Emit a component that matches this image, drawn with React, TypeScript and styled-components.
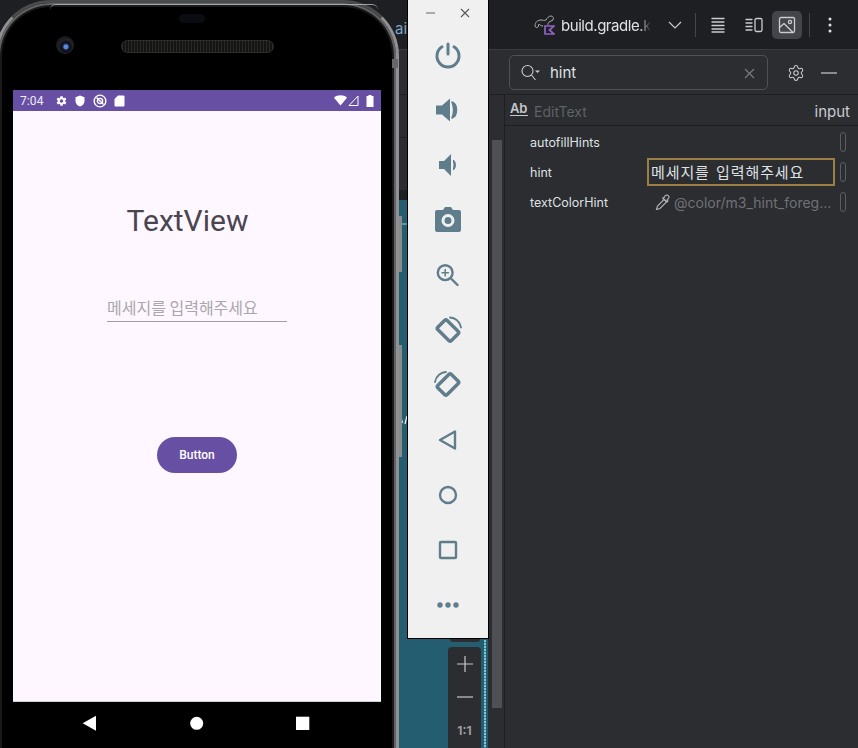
import React from "react";
import styled, { createGlobalStyle } from "styled-components";
import { Settings } from "lucide-react";

const Global = createGlobalStyle`
  html, body { margin: 0; padding: 0; background: #1e1f22; }
  body { width: 858px; height: 748px; overflow: hidden; font-family: "Inter", "Noto Sans CJK KR", sans-serif; }
  * { box-sizing: border-box; }
`;
const KR = `"Noto Sans CJK KR", "Noto Sans", sans-serif`;
const Page = styled.div`
  position: relative; width: 858px; height: 748px; overflow: hidden;
  display: grid; grid-template-columns: 505px 353px; background: #1e1f22;
`;
const Canvas = styled.div`
  display: grid; grid-template-rows: 50px 45px 43px 52px 10px 1fr;
  background: #1e1f22; position: relative;
`;
const CanvasTopBar = styled.div`
  background: #1e1f22; border-bottom: 1px solid #393b40;
  display: flex; justify-content: flex-end; padding: 20px 0 0;
`;
const ClippedTab = styled.span`
  color: #7fa6c4; font: 15px/18px "Inter", sans-serif; width: 110px;
`;
const CanvasBand = styled.div`
  background: #2b2d30; border-bottom: 1px solid #1e1f22;
`;
const CanvasDark = styled.div`background: #2b2d30;`;
const CanvasShade = styled.div`background: #1e1f22;`;
const Teal = styled.div`background: #245c70;`;
const Gutter = styled.div`
  position: absolute; left: 488px; top: 95px; bottom: 0; width: 17px;
  background: #2b2d30; border-right: 1px solid #1e1f22;
`;
const ScrollThumb = styled.div`
  position: absolute; left: 4px; top: 45px; width: 10px; height: 568px; background: #4e5055;
`;
const Phone = styled.div`
  position: absolute; left: -5px; top: 0; width: 404px; height: 770px;
  background: #000; border-radius: 56px 56px 0 0;
  border: 3px solid #909192; border-top-color: #4a4b4c; border-bottom: none;
  box-shadow: inset 0 0 0 2px #626364, inset 0 0 0 4px #1a1a1a;
`;
const Bump = styled.div`
  position: absolute; left: 392px; top: 59px; width: 6px; height: 9px; background: #666768;
`;
const SideButton = styled.div<{ $top: number; $height: number }>`
  position: absolute; left: 399px; top: ${p => p.$top}px; width: 3px; height: ${p => p.$height}px;
  background: #8a8b8c;
`;
const CanvasScraps = styled.svg`
  position: absolute; left: 399px; top: 200px; width: 9px; height: 240px;
`;
const Highlight = styled.div`
  position: absolute; left: 52px; top: 1px; width: 328px; height: 6px;
  border-top: 1px solid #b5b6b7; border-radius: 30px 30px 0 0; opacity: .85;
`;
const Pill = styled.div`
  position: absolute; left: 181px; top: 11px; width: 26px; height: 9px;
  border-radius: 5px; background: #0b0b12;
`;
const Speaker = styled.div`
  position: absolute; left: 123px; top: 37px; width: 153px; height: 13px;
  border-radius: 7px; background: repeating-linear-gradient(90deg, #2a2a28 0 1px, #141413 1px 3px);
  border: 1px solid #2e2e2c;
`;
const Camera = styled.div`
  position: absolute; left: 58px; top: 33px; width: 18px; height: 18px; border-radius: 50%;
  background: radial-gradient(circle at 55% 60%, #5c86e0 0 2px, #1a2338 3px, #0c0e14 5px, #24252a 7px, #1a1a1c 9px);
`;
const Screen = styled.div`
  position: absolute; left: 15px; top: 87px; width: 368px; height: 612px;
  background: #fef7ff; display: flex; flex-direction: column; align-items: center;
  border-bottom: 1px solid #d0ced4;
`;
const StatusBar = styled.div`
  width: 100%; height: 21px; background: #6750a4; color: #f1edf7;
  display: flex; align-items: center; padding: 0 7px; flex: none;
`;
const Clock = styled.span`font: 12px Roboto, sans-serif; margin-right: 10px; width: 25px; letter-spacing: .1px;`;
const StatusIcons = styled.div`display: flex; align-items: center; gap: 7px;`;
const StatusRight = styled.div`display: flex; align-items: center; gap: 1px; margin-left: auto;`;
const BatteryIcon = styled.svg`margin-left: 6px;`;
const Title = styled.div`
  margin: 92px 19px 0 0; font: 30px/36px Roboto, sans-serif; color: #49454f; height: 36px;
`;
const HintField = styled.div`
  margin-top: 58px; width: 180px; height: 25px;
  border-bottom: 1.5px solid #a09ea4; color: #a9a7ac;
  font: 16px/20px ${KR}; white-space: nowrap;
`;
const ActionButton = styled.div`
  margin-top: 115px; width: 80px; height: 36px; border-radius: 18px; background: #6750a4;
  color: #fff; font: 500 12px/36px Roboto, sans-serif; text-align: center;
`;
const NavBar = styled.div`
  position: absolute; left: 15px; top: 699px; width: 368px; height: 46px;
`;
const NavIcons = styled.svg`width: 368px; height: 46px; display: block;`;

const Tool = styled.div`
  position: absolute; left: 407px; top: -1px; width: 82px; height: 640px;
  background: #f0f0f0; border: 1px solid #000; border-top: none;
  display: flex; flex-direction: column; align-items: center; padding-top: 5px;
`;
const WinRow = styled.div`
  width: 100%; height: 18px; margin-bottom: 5px; display: flex; justify-content: space-between; align-items: center; padding: 0 18px; flex: none;
`;
const ToolSlot = styled.div`
  width: 100%; height: 55px; display: flex; align-items: center; justify-content: center; flex: none;
`;
const ZoomCap = styled.div`
  position: absolute; left: 450px; top: 636px; width: 30px; height: 6px; background: #2b2d30; border-radius: 0 0 3px 3px;
`;
const ZoomBox = styled.div`
  position: absolute; left: 448px; top: 647px; width: 33px; height: 110px;
  background: #2b2d30; border-radius: 4px; display: flex; flex-direction: column; align-items: center;
  color: #c8c9cc;
`;
const ZoomGlyph = styled.svg`width: 20px; height: 33px; display: block;`;
const OneToOne = styled.div`font: 700 12px/20px Inter, sans-serif; color: #9a9b9e; margin-top: 8px;`;
const DashLine = styled.div`
  position: absolute; left: 484px; top: 640px; width: 2px; height: 108px;
  background: repeating-linear-gradient(180deg, #7fc6d8 0 2px, #3c8398 2px 3px);
`;

const Panel = styled.div`
  grid-column: 2; background: #2b2d30; display: flex; flex-direction: column; min-width: 0;
`;
const TopBar = styled.div`
  height: 50px; background: #1e1f22; border-bottom: 1px solid #393b40; flex: none;
  display: flex; align-items: center; color: #dfe1e5;
`;
const FileIcon = styled.svg`margin-left: 29px; flex: none;`;
const FileName = styled.span`
  font: 15px/20px Inter, sans-serif; color: #dfe1e5; width: 92px; white-space: nowrap; letter-spacing: -.45px;
  -webkit-mask-image: linear-gradient(90deg, #000 78px, transparent 90px); margin: 3px 0 0 6px;
`;
const Chevron = styled.svg`margin-left: 15px; flex: none;`;
const IconButton = styled.div<{ $active?: boolean; $left?: number }>`
  width: 30px; height: 28px; border-radius: 5px; display: flex; align-items: center; justify-content: center;
  margin-left: ${p => p.$left ?? 0}px;
  background: ${p => (p.$active ? "#43454a" : "transparent")}; flex: none;
`;
const Divider = styled.div<{ $left: number }>`
  width: 1px; height: 24px; background: #43454a; flex: none; margin-left: ${p => p.$left}px;
`;
const MoreIcon = styled.svg`margin-left: 18px; flex: none;`;
const SearchRow = styled.div`
  height: 45px; flex: none; border-bottom: 1px solid #1e1f22; display: flex; align-items: center; padding: 0 0 0 4px;
`;
const SearchBox = styled.div`
  width: 259px; height: 35px; border: 1px solid #4e5157; border-radius: 5px; display: flex; align-items: center;
  padding: 2px 12px 0 11px; color: #dfe1e5;
`;
const SearchText = styled.span`font: 15px/20px Inter, sans-serif; margin-left: 10px; flex: 1; color: #dfe1e5;`;
const GearWrap = styled.span`margin: 2px 0 0 19px; display: flex; color: #c9ccd1;`;
const CollapseIcon = styled.svg`margin: 2px 0 0 16px;`;
const HeaderRow = styled.div`
  height: 31px; flex: none; border-bottom: 1px solid #1e1f22; display: flex; align-items: center; padding: 3px 8px 0 5px;
`;
const AbIcon = styled.span`
  font: 600 13px/14px Inter, sans-serif; color: #c5c7cc; border-bottom: 1px solid #c5c7cc; width: 18px; height: 15px; margin-top: -6px; letter-spacing: -.3px;
`;
const ComponentName = styled.span`font: 14px Inter, sans-serif; color: #5f6166; margin-left: 6px; flex: 1;`;
const ComponentId = styled.span`font: 15px Inter, sans-serif; color: #c8cad0;`;
const AttrList = styled.div`display: flex; flex-direction: column; padding-top: 1px;`;
const AttrRow = styled.div`
  height: 30px; display: grid; grid-template-columns: 117px 188px 11px; align-items: center; padding-left: 25px;
`;
const AttrName = styled.span`font: 12.5px Inter, sans-serif; color: #dfe1e5;`;
const HintEditor = styled.div`
  width: 188px; height: 28px; border: 2px solid #9c7f45; padding: 0 2px; color: #dfe1e5;
  font: 15px/24px ${KR}; white-space: nowrap; overflow: hidden; letter-spacing: .9px; word-spacing: 2px;
`;
const ResourceValue = styled.div`
  display: flex; align-items: center; gap: 2px; padding-left: 8px; color: #6f7277; font: 14px Inter, sans-serif; white-space: nowrap;
`;
const Toggle = styled.div`
  width: 6px; height: 20px; border: 1px solid #5a5d63; border-radius: 3px; justify-self: end;
`;

const C = "#607d8b";
const stroke = { fill: "none", stroke: C, strokeWidth: 3, strokeLinecap: "round" as const, strokeLinejoin: "round" as const };
const T = ({ children }: { children: React.ReactNode }) => (
  <svg width={28} height={28} viewBox="0 0 28 28">{children}</svg>
);
const Line = ({ children }: { children: React.ReactNode }) => (
  <svg width={20} height={20} viewBox="0 0 20 20" fill="none" stroke="#c9ccd1" strokeWidth={1.3} strokeLinecap="round" strokeLinejoin="round">{children}</svg>
);

export default function App() {
  return (
    <Page>
      <Global />
      <Canvas>
        <CanvasTopBar><ClippedTab>ai</ClippedTab></CanvasTopBar>
        <CanvasBand />
        <CanvasBand />
        <CanvasDark />
        <CanvasShade />
        <Teal />
      </Canvas>
      <Panel>
        <TopBar>
          <FileIcon width="21" height="20" viewBox="0 0 21 20" fill="none" stroke="#a9abb0" strokeWidth="1">
            <path d="M1 11c0-4 3-6 6-6 2 0 3 1 5 0 1-2 3-4 5-4 2 0 3 2 2 4-1 1-3 1-4 2-1 1-1 2-1 3" />
            <path d="M1 11c1 2 2 2 3 1l1-3c1 1 2 2 4 2" />
            <path d="M11 19v-8h9l-4.500 4 4.500 4z" stroke="#8f62c9" strokeWidth="1.700" />
          </FileIcon>
          <FileName>build.gradle.k</FileName>
          <Chevron width="14" height="10" viewBox="0 0 14 10" fill="none" stroke="#c9ccd1" strokeWidth="1.200"><path d="M1 2l6 6 6-6" /></Chevron>
          <Divider $left={13} />
          <IconButton $left={7}><Line><path d="M4 3.500h12M4 7h12M4 10.500h12M4 14h12M4 17h12" /></Line></IconButton>
          <IconButton $left={6}><Line><path d="M2 4.500h6M2 8h6M2 11.500h6M2 15h6" /><rect x="11" y="3.500" width="7" height="13" rx="1.500" /></Line></IconButton>
          <IconButton $active $left={3}><Line><rect x="2.500" y="2.500" width="15" height="15" rx="1.500" /><circle cx="13" cy="7" r="1.600" /><path d="M2.500 12.500l4.500-4 9 9" /></Line></IconButton>
          <Divider $left={7} />
          <MoreIcon width="4" height="16" viewBox="0 0 4 16"><circle cx="2" cy="2" r="1.500" fill="#dfe1e5" /><circle cx="2" cy="8" r="1.500" fill="#dfe1e5" /><circle cx="2" cy="14" r="1.500" fill="#dfe1e5" /></MoreIcon>
        </TopBar>
        <SearchRow>
          <SearchBox>
            <svg width="19" height="18" viewBox="0 0 19 18" fill="none" stroke="#c9ccd1" strokeWidth="1.100"><circle cx="6.500" cy="7" r="5.500" /><path d="M10.500 11l4 5" /><path d="M14 6.500h5l-2.500 2.600z" fill="#c9ccd1" stroke="none" /></svg>
            <SearchText>hint</SearchText>
            <svg width="11" height="11" viewBox="0 0 11 11" stroke="#7a7d82" strokeWidth="1.100"><path d="M1 1l9 9M10 1l-9 9" /></svg>
          </SearchBox>
          <GearWrap><Settings size={18} strokeWidth={1.35} /></GearWrap>
          <CollapseIcon width="16" height="2" viewBox="0 0 16 2"><path d="M0 1h16" stroke="#c9ccd1" strokeWidth="1.200" /></CollapseIcon>
        </SearchRow>
        <HeaderRow>
          <AbIcon>Ab</AbIcon>
          <ComponentName>EditText</ComponentName>
          <ComponentId>input</ComponentId>
        </HeaderRow>
        <AttrList>
          <AttrRow><AttrName>autofillHints</AttrName><span /><Toggle /></AttrRow>
          <AttrRow><AttrName>hint</AttrName><HintEditor>메세지를 입력해주세요</HintEditor><Toggle /></AttrRow>
          <AttrRow>
            <AttrName>textColorHint</AttrName>
            <ResourceValue>
              <svg width="17" height="18" viewBox="0 0 17 18" fill="none" stroke="#b0b3b8" strokeWidth="1.100"><path d="M1.500 16.500l1-3.500 6.500-6.500 2.500 2.500-6.500 6.500zM8 5.500l1.500-1.500c1-3.500 6-1.500 4 1.500l-1.500 1.500 1 1-1 1-4-4z" /></svg>
              <span>@color/m3_hint_foreg...</span>
            </ResourceValue>
            <Toggle />
          </AttrRow>
        </AttrList>
      </Panel>

      <Gutter><ScrollThumb /></Gutter>
      <CanvasScraps viewBox="0 0 9 240">
        <path d="M3 24h6" stroke="#8fd6e6" strokeWidth="1" />
        <path d="M1.500 216l2 7M6 224l2-8" stroke="#e6eef2" strokeWidth="1.300" />
      </CanvasScraps>
      <DashLine />
      <ZoomCap />
      <ZoomBox>
        <ZoomGlyph viewBox="0 0 20 33"><path d="M10 9v16M2 17h16" stroke="#c8c9cc" strokeWidth="1.200" /></ZoomGlyph>
        <ZoomGlyph viewBox="0 0 20 33"><path d="M2 17h16" stroke="#c8c9cc" strokeWidth="1.200" /></ZoomGlyph>
        <OneToOne>1:1</OneToOne>
      </ZoomBox>

      <Phone>
        <Highlight />
        <Pill />
        <Speaker />
        <Camera />
        <Screen>
          <StatusBar>
            <Clock>7:04</Clock>
            <StatusIcons>
              <svg width="12" height="12" viewBox="0 0 24 24" fill="#fff"><path fillRule="evenodd" d="M20.400 13a8.500 8.500 0 000-2l2.300-1.800-2.300-4-2.700 1.100a8.500 8.500 0 00-1.700-1L15.500 2.500h-4.500L10 5.300a8.500 8.500 0 00-1.700 1L5.600 5.200l-2.300 4L5.600 11a8.500 8.500 0 000 2l-2.300 1.800 2.300 4 2.700-1.100a8.500 8.500 0 001.700 1l1 2.800h4.500l.5-2.800a8.500 8.500 0 001.700-1l2.700 1.100 2.300-4zM13 15.500a3.500 3.500 0 110-7 3.500 3.500 0 010 7z" /></svg>
              <svg width="12" height="12" viewBox="0 0 24 24" fill="#fff"><path d="M12 1L3 4.500v7c0 5.500 3.800 10 9 11.500 5.200-1.500 9-6 9-11.500v-7z" /></svg>
              <svg width="14" height="14" viewBox="0 0 24 24" fill="none" stroke="#fff" strokeWidth="2.400"><circle cx="12" cy="12" r="10" /><circle cx="12" cy="12" r="4.500" /><path d="M6 6l12 12" /></svg>
              <svg width="11" height="12" viewBox="0 0 22 24" fill="#fff"><path d="M8 1h11a2 2 0 012 2v18a2 2 0 01-2 2H3a2 2 0 01-2-2V8z" /></svg>
            </StatusIcons>
            <StatusRight>
              <svg width="13" height="11" viewBox="0 0 24 20" fill="#fff"><path d="M12 19L0 5C6-1 18-1 24 5z" /></svg>
              <svg width="11" height="11" viewBox="0 0 22 22" fill="none" stroke="#fff" strokeWidth="2"><path d="M20 2v19H2z" /></svg>
              <BatteryIcon width="8" height="12" viewBox="0 0 16 24" fill="#fff"><path d="M5 0h6v2h4v22H1V2h4z" /></BatteryIcon>
            </StatusRight>
          </StatusBar>
          <Title>TextView</Title>
          <HintField>메세지를 입력해주세요</HintField>
          <ActionButton>Button</ActionButton>
        </Screen>
        <NavBar>
          <NavIcons viewBox="0 0 368 46">
            <path d="M83 13.700L69.700 21.200 83 28.700z" fill="#fff" />
            <circle cx="183.700" cy="21.300" r="6.500" fill="#fff" />
            <rect x="283" y="14.700" width="13.300" height="13.300" fill="#fff" />
          </NavIcons>
        </NavBar>
      </Phone>
      <Bump />
      <SideButton $top={216} $height={56} />
      <SideButton $top={345} $height={112} />

      <Tool>
        <WinRow>
          <svg width="10" height="10" viewBox="0 0 10 10"><path d="M0 5h9" stroke="#6f7478" strokeWidth="1.100" /></svg>
          <svg width="10" height="10" viewBox="0 0 10 10"><path d="M1 1l8 8M9 1l-8 8" stroke="#56595c" strokeWidth="1.100" /></svg>
        </WinRow>
        <ToolSlot>
          <T><path d="M14 3v10" {...stroke} /><path d="M8 5.800a11 11 0 1012 0" {...stroke} /></T>
        </ToolSlot>
        <ToolSlot>
          <T><path d="M2 9.500h6L16 2.500v23l-8-7H2z" fill={C} /><path d="M18 6c6 2 6 14 0 16 2-5 2-11 0-16z" fill={C} stroke={C} strokeWidth="1.500" strokeLinejoin="round" /></T>
        </ToolSlot>
        <ToolSlot>
          <T><path d="M5 10h5l7-7v22l-7-7H5z" fill={C} /><path d="M19.500 9.500c2.500 1.500 2.500 7.500 0 9 .8-3 .8-6 0-9z" fill={C} stroke={C} strokeWidth="1.200" strokeLinejoin="round" /></T>
        </ToolSlot>
        <ToolSlot>
          <T><path fillRule="evenodd" d="M9 4l2-3h6l2 3h6a2 2 0 012 2v18a2 2 0 01-2 2H3a2 2 0 01-2-2V6a2 2 0 012-2zm5 4a6.500 6.500 0 100 13 6.500 6.500 0 000-13zm0 3a3.500 3.500 0 110 7 3.500 3.500 0 010-7z" fill={C} /></T>
        </ToolSlot>
        <ToolSlot>
          <T><circle cx="11.200" cy="11.700" r="7.400" {...stroke} strokeWidth="2.400" /><path d="M17 17.500l6.500 6.500" {...stroke} strokeWidth="2.400" /><path d="M11.200 8.500v6.400M8 11.700h6.400" {...stroke} strokeWidth="1.500" /></T>
        </ToolSlot>
        <ToolSlot>
          <T><rect x="7.500" y="5" width="13" height="19" rx="1.500" transform="rotate(-45 14 14.500)" {...stroke} strokeWidth="3.400" /><path d="M16 1.500c5 0 10 4 11 10" {...stroke} strokeWidth="1.800" /></T>
        </ToolSlot>
        <ToolSlot>
          <T><rect x="7.500" y="4" width="13" height="19" rx="1.500" transform="rotate(45 14 13.500)" {...stroke} strokeWidth="3.400" /><path d="M12 1c-5 0-10 4-11 10" {...stroke} strokeWidth="1.800" /></T>
        </ToolSlot>
        <ToolSlot>
          <T><path d="M6 14L21 5.500v17z" {...stroke} strokeWidth="2.400" /></T>
        </ToolSlot>
        <ToolSlot>
          <T><circle cx="14" cy="14" r="8" {...stroke} strokeWidth="2.400" /></T>
        </ToolSlot>
        <ToolSlot>
          <T><rect x="6" y="6" width="16" height="16" rx="1" {...stroke} strokeWidth="2.400" /></T>
        </ToolSlot>
        <ToolSlot>
          <T><circle cx="6" cy="14" r="2.700" fill={C} /><circle cx="14" cy="14" r="2.700" fill={C} /><circle cx="22" cy="14" r="2.700" fill={C} /></T>
        </ToolSlot>
      </Tool>
    </Page>
  );
}
